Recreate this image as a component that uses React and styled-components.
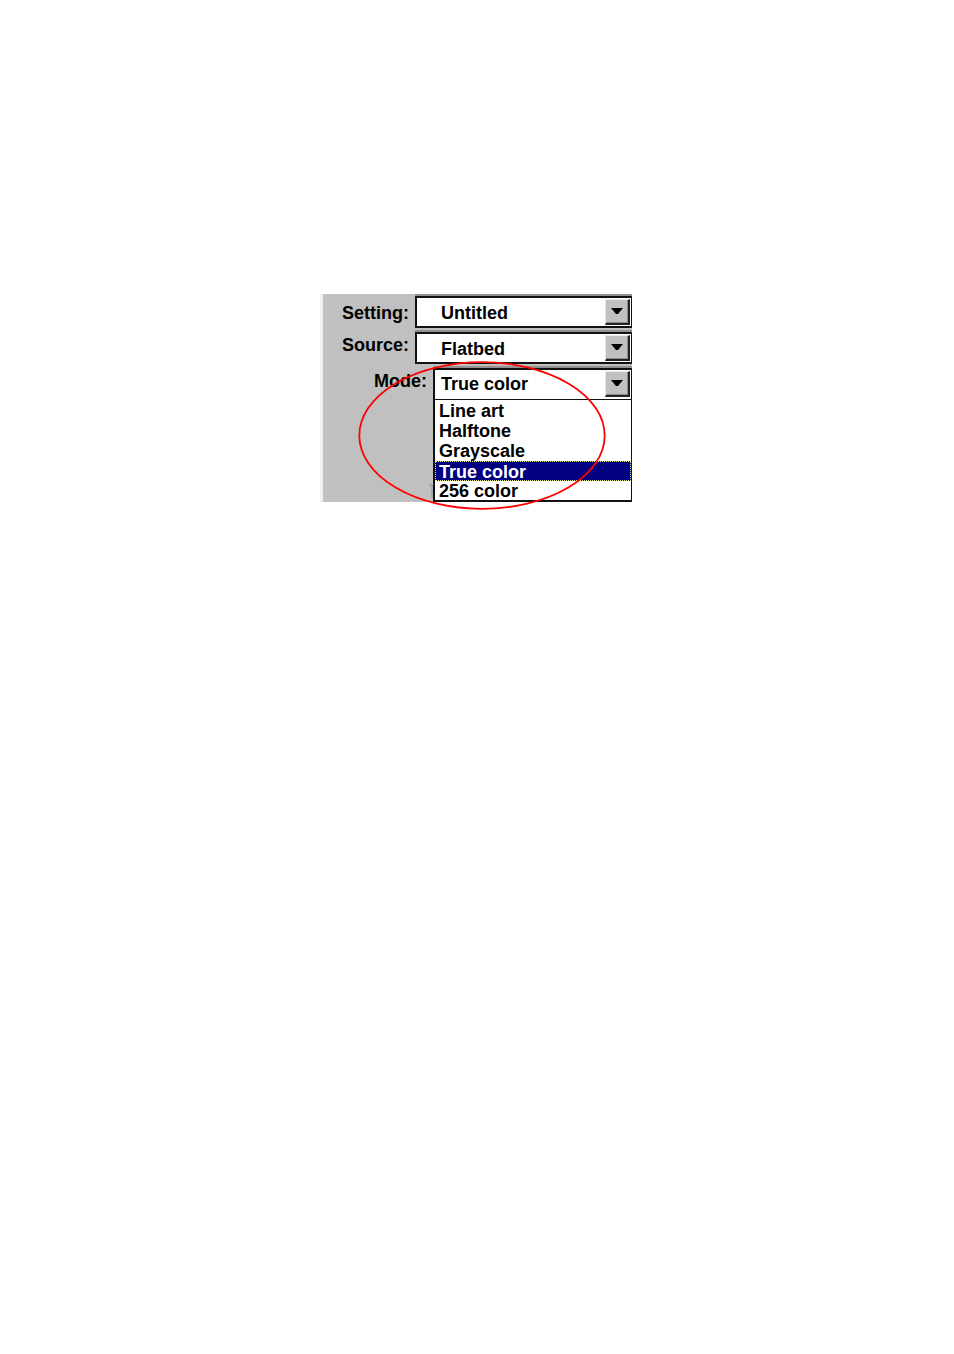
import React, { useState } from "react";
import styled, { createGlobalStyle } from "styled-components";

const GlobalStyle = createGlobalStyle`
  *, *::before, *::after { box-sizing: border-box; }
  body {
    margin: 0;
    background: #fff;
    color: #000;
    font: bold 18px/20px "Liberation Sans", Arial, sans-serif;
  }
`;

const Page = styled.main`
  display: flex;
  justify-content: center;
  padding: 294px 2px 40px 0;
`;

const Panel = styled.form`
  position: relative;
  display: flex;
  flex-direction: column;
  gap: 4px;
  width: 100%;
  max-width: 312px;
  padding-top: 2px;
  border-left: 3px solid #f0f0f0;
  background: #c0c0c0;
`;

const Row = styled.div`
  display: grid;
  grid-template-columns: ${(p) => (p.$inset ? "110px" : "92px")} 1fr;
`;

const Label = styled.label`
  padding: ${(p) => (p.$raised ? "3px" : "7px")} 6px 0 0;
  text-align: right;
`;

const Field = styled.div`
  display: flex;
  align-items: center;
  position: relative;
  height: 32px;
  border: 2px solid #111;
  border-width: ${(p) => (p.$open ? "2px 1px 1px 2px" : "2px 1px 2px 2px")};
  background: #fff;
  box-shadow: 0 -2px 0 #919191;
`;

const Select = styled.select`
  appearance: none;
  width: 100%;
  height: 28px;
  align-self: flex-start;
  margin: 0;
  padding: ${(p) => (p.$open ? "0 30px 0 6px" : "2px 30px 0 24px")};
  border: 0;
  border-radius: 0;
  outline: 0;
  background: transparent;
  color: #000;
  font: inherit;
`;

const ArrowBox = styled.span`
  position: absolute;
  top: 1px;
  right: 1px;
  display: flex;
  align-items: center;
  justify-content: center;
  width: 25px;
  height: 26px;
  padding-bottom: 1px;
  border: 1px solid #e8e8e8;
  border-right: 2px solid #222;
  border-bottom: 2px solid #222;
  background: #c0c0c0;
  box-shadow: inset -1px -1px 0 #8a8a8a;
  pointer-events: none;
`;

const List = styled.select`
  appearance: none;
  display: block;
  width: 100%;
  height: 102px;
  margin: 0;
  padding: 1px 0 0;
  overflow: hidden;
  border: solid #111;
  border-width: 0 1px 2px 2px;
  border-radius: 0;
  outline: 0;
  background: #fff;
  color: #000;
  font: inherit;
`;

const Option = styled.option`
  height: 20px;
  min-height: 20px;
  padding: 0 4px;
  color: #000;
  font: inherit;
  font-weight: bold;
  line-height: 20px;

  &:checked {
    padding: 0 3px;
    border: 1px dotted #f0f080;
    background: #000080 linear-gradient(#000080, #000080);
    color: #fff;
    line-height: 18px;
  }
`;

const Highlight = styled.svg`
  position: absolute;
  top: 67px;
  left: 35px;
  width: 248px;
  height: 149px;
  pointer-events: none;
`;

const MODES = ["Line art", "Halftone", "Grayscale", "True color", "256 color"];

function Arrow() {
  return (
    <ArrowBox aria-hidden="true">
      <svg width="12" height="6" viewBox="0 0 12 6">
        <path d="M0 0h12L7 6H5z" fill="#000" />
      </svg>
    </ArrowBox>
  );
}

function ComboRow({ id, label, options, value, onChange, raised, open, children }) {
  return (
    <Row $inset={open}>
      <Label htmlFor={id} $raised={raised}>{label}</Label>
      <div>
        <Field $open={open}>
          <Select id={id} $open={open} value={value} onChange={(e) => onChange(e.target.value)}>
            {options.map((o) => <option key={o}>{o}</option>)}
          </Select>
          <Arrow />
        </Field>
        {children}
      </div>
    </Row>
  );
}

export default function App() {
  const [setting, setSetting] = useState("Untitled");
  const [source, setSource] = useState("Flatbed");
  const [mode, setMode] = useState("True color");

  return (
    <>
      <GlobalStyle />
      <Page>
        <Panel>
          <ComboRow id="setting" label="Setting:" options={["Untitled"]} value={setting} onChange={setSetting} />
          <ComboRow id="source" label="Source:" options={["Flatbed"]} value={source} onChange={setSource} raised />
          <ComboRow id="mode" label="Mode:" options={MODES} value={mode} onChange={setMode} raised open>
            <List size={5} aria-label="Mode options" value={mode} onChange={(e) => setMode(e.target.value)}>
              {MODES.map((m) => <Option key={m}>{m}</Option>)}
            </List>
          </ComboRow>
          <Highlight viewBox="0 0 248 149" aria-hidden="true">
            <path d="M71 124h3v13" fill="none" stroke="#8c8c8c" strokeWidth="1" />
            <ellipse cx="124" cy="74.5" rx="122.7" ry="73.3" fill="none" stroke="#ff0000" strokeWidth="1.8" />
          </Highlight>
        </Panel>
      </Page>
    </>
  );
}
